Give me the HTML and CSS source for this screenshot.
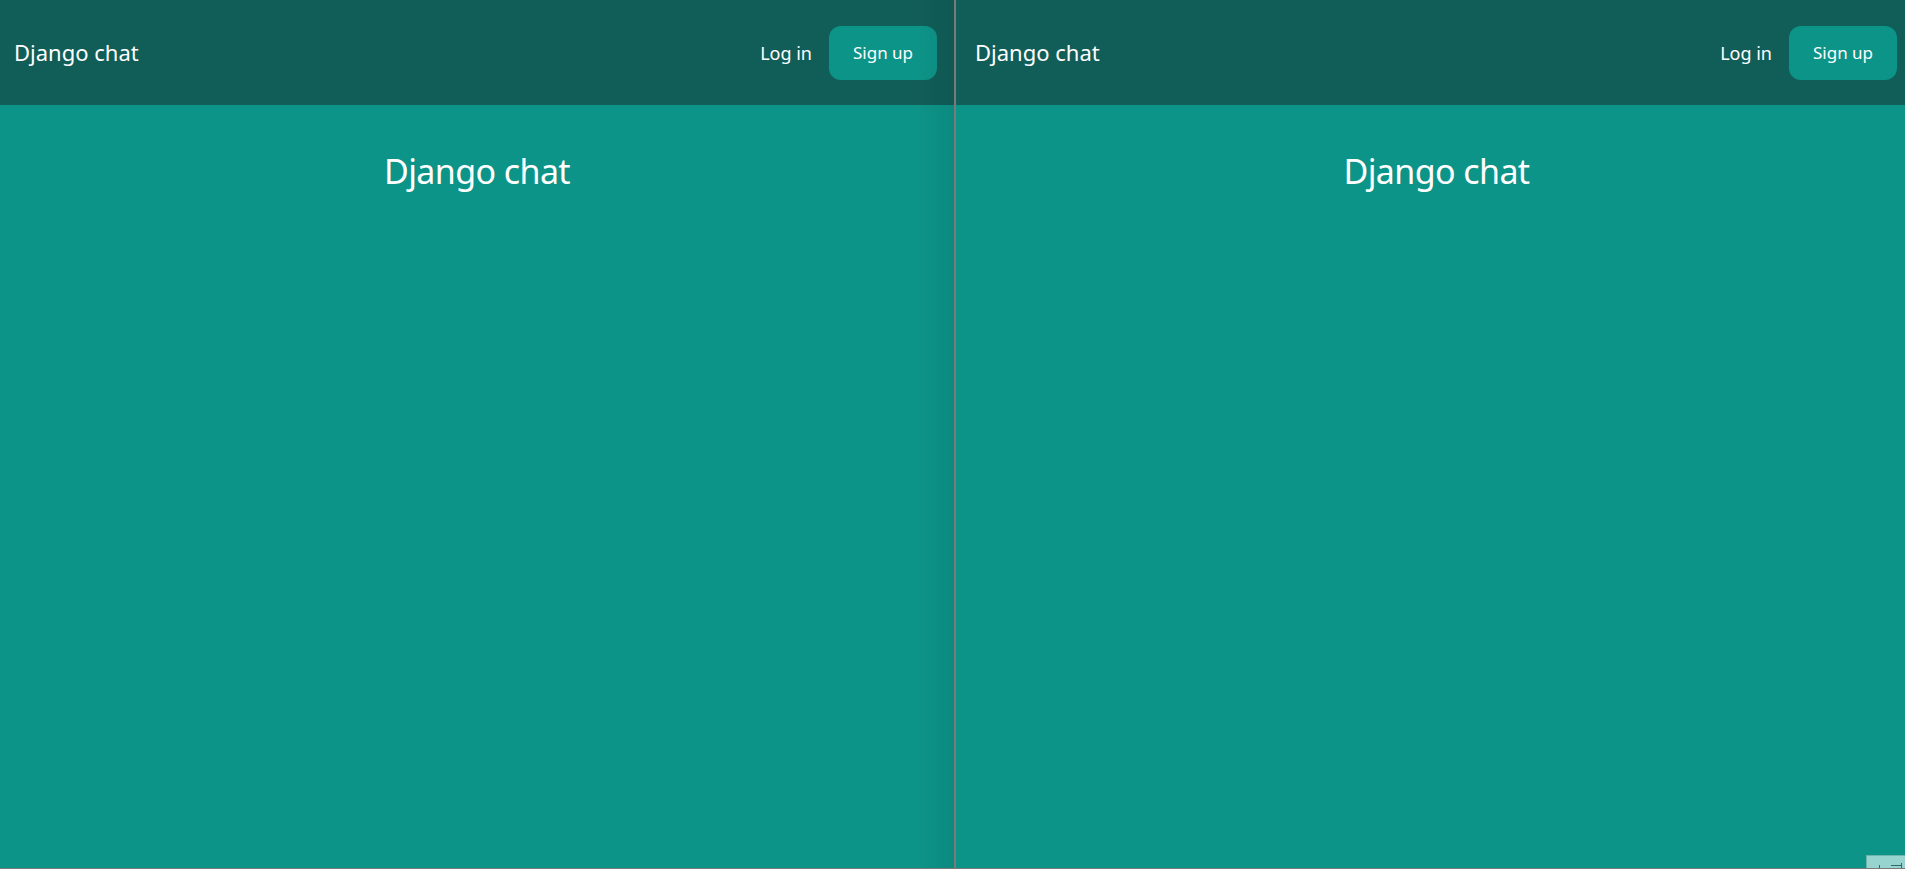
FILE: index.html
```html
<!DOCTYPE html>
<html>
<head>
<meta charset="utf-8">
<link rel="stylesheet" href="styles.css">
</head>
<body>
<div class="split">
  <div class="pane pane-left">
    <div class="app">
      <nav class="nav">
        <a class="brand">Django chat</a>
        <div class="nav-links">
          <a class="login">Log in</a>
          <a class="signup">Sign up</a>
        </div>
      </nav>
      <main class="main">
        <h1 class="title">Django chat</h1>
      </main>
    </div>
    <div class="shade"></div>
  </div>
  <div class="divider"></div>
  <div class="pane pane-right">
    <div class="app app-right">
      <nav class="nav nav-right">
        <a class="brand">Django chat</a>
        <div class="nav-links">
          <a class="login">Log in</a>
          <a class="signup">Sign up</a>
        </div>
      </nav>
      <main class="main">
        <h1 class="title">Django chat</h1>
      </main>
    </div>
    <div class="corner-tab">
      <i class="mark mark-a"></i>
      <i class="mark mark-b"></i>
      <i class="mark mark-c"></i>
    </div>
  </div>
</div>
</body>
</html>
```
FILE: styles.css
```css
html, body {
  margin: 0;
  padding: 0;
  height: 100%;
  overflow: hidden;
  background: #0d9488;
}
body {
  font-family: "Noto Sans", "Open Sans", sans-serif;
  color: #ffffff;
}
.split {
  display: flex;
  height: 868px;
  border-bottom: 1px solid #7a7a7a;
}
.pane {
  position: relative;
  overflow: hidden;
  background: #0d9488;
}
.pane-left {
  width: 954px;
  flex: none;
}
.pane-right {
  flex: 1;
}
.divider {
  width: 2px;
  flex: none;
  background: #7a7a7a;
}
.shade {
  position: absolute;
  top: 0;
  right: 0;
  width: 40px;
  height: 100%;
  background: linear-gradient(to right, rgba(0,0,0,0), rgba(0,0,0,0.07));
  pointer-events: none;
}
.app {
  width: 954px;
  height: 100%;
  background: #0d9488;
}
.app-right {
  width: 961px;
}
.nav {
  height: 105px;
  background: #115e59;
  display: flex;
  align-items: center;
  justify-content: space-between;
  padding: 0 17px 0 14px;
  box-sizing: border-box;
}
.nav-right {
  padding: 0 20px 0 19px;
}
.brand {
  font-size: 22px;
  position: relative;
  top: -1px;
}
.nav-links {
  display: flex;
  align-items: center;
  gap: 17px;
}
.login {
  font-size: 18px;
}
.signup {
  font-size: 17px;
  background: #0d9488;
  width: 108px;
  height: 54px;
  border-radius: 12px;
  display: flex;
  align-items: center;
  justify-content: center;
}
.main {
  display: flex;
  justify-content: center;
}
.title {
  margin: 44px 0 0;
  font-weight: 400;
  font-size: 34px;
  letter-spacing: -0.6px;
  line-height: 1.3;
}
.corner-tab {
  position: absolute;
  right: 0;
  bottom: 0;
  width: 39px;
  height: 13px;
  background: #97d4cf;
  border-top: 1px solid #6fb3ad;
  border-left: 1px solid #6fb3ad;
  box-sizing: border-box;
}
.mark {
  position: absolute;
  background: #2f6c67;
}
.mark-a {
  left: 12px;
  bottom: 0;
  width: 1px;
  height: 3px;
}
.mark-b {
  left: 24px;
  bottom: 2px;
  width: 10px;
  height: 1px;
}
.mark-c {
  left: 34px;
  bottom: 0;
  width: 1px;
  height: 5px;
}
```
